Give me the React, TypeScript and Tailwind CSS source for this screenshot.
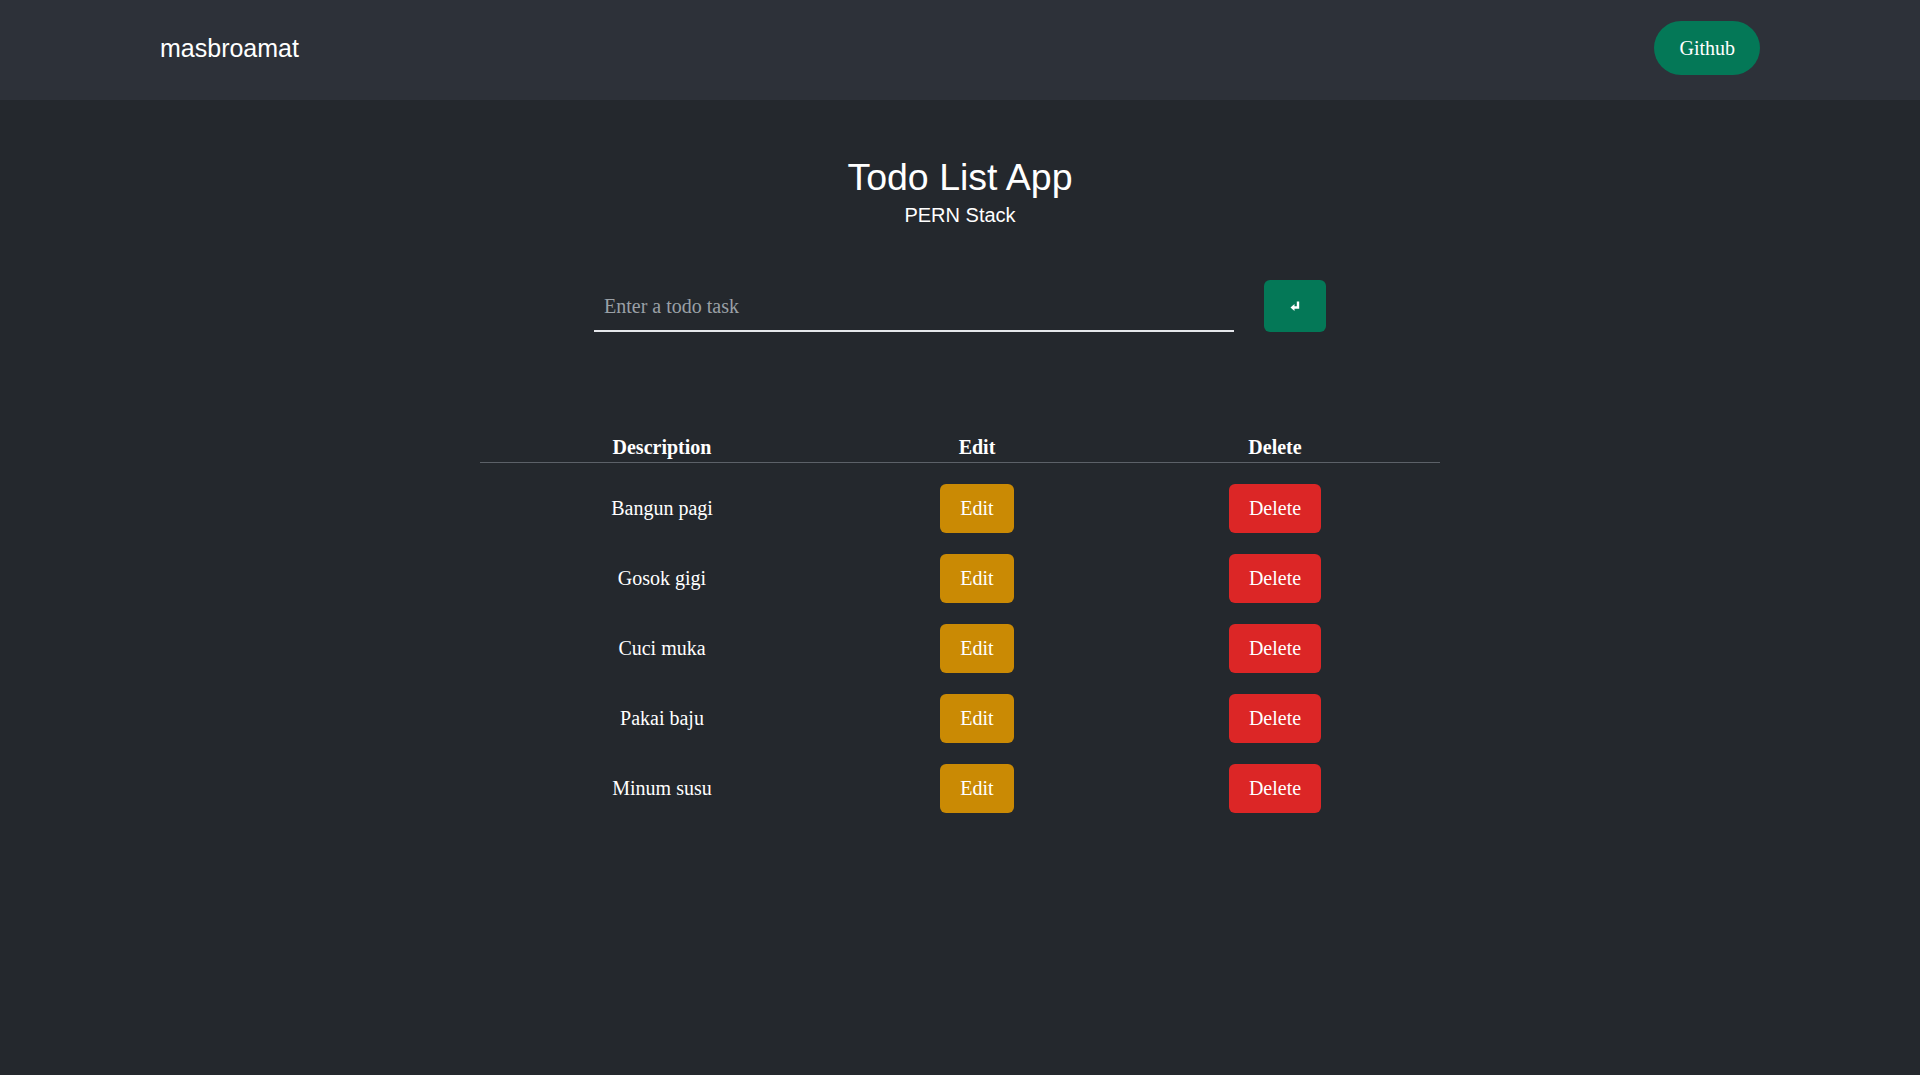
import React from 'react';

const TODOS = ['Bangun pagi', 'Gosok gigi', 'Cuci muka', 'Pakai baju', 'Minum susu'];

const serif = "font-['Liberation_Serif','Times_New_Roman',serif]";

export default function App() {
  return (
    <div className={`min-h-screen bg-[#24282d] text-white ${serif}`}>
      {/* Navbar */}
      <header className="h-[100px] bg-[#2d3139] px-[160px] pb-1 flex items-center justify-between">
        <span className="font-['Liberation_Sans',Arial,sans-serif] text-[25px] leading-none text-white">
          masbroamat
        </span>
        <button className="h-[54px] px-[25px] rounded-full bg-[#047857] text-[20px] leading-6 text-white">
          Github
        </button>
      </header>

      <main className="flex flex-col items-center pt-[55px]">
        {/* Title */}
        <h1 className="font-['Liberation_Sans',Arial,sans-serif] text-[37.5px] leading-[45px] text-white">
          Todo List App
        </h1>
        <p className="mt-[3px] font-['Liberation_Sans',Arial,sans-serif] text-[20px] leading-6 text-white">
          PERN Stack
        </p>

        {/* Input */}
        <form className="mt-[53px] flex items-end gap-[30px]" onSubmit={(e) => e.preventDefault()}>
          <input
            type="text"
            placeholder="Enter a todo task"
            className={`w-[640px] h-[50px] bg-transparent border-b-2 border-[#e5e7eb] pl-[10px] text-[20px] text-white placeholder:text-[#9aa0a6] outline-none ${serif}`}
          />
          <button
            type="submit"
            className="w-[62px] h-[52px] rounded-[6px] bg-[#047857] flex items-center justify-center text-white"
          >
            <svg width="12" height="12" viewBox="0 0 12 12" fill="none">
              <path d="M9 1.5V7.5H4.5" stroke="white" strokeWidth="2.4" />
              <path d="M5.5 4L1.5 7.5L5.5 11Z" fill="white" />
            </svg>
          </button>
        </form>

        {/* Table */}
        <div className="mt-[98px] w-[960px]">
          <div className="grid grid-cols-[364px_266px_330px] border-b border-[#5c6168] pt-[5px] pb-[3px] text-[20px] leading-6 font-bold text-center">
            <div>Description</div>
            <div>Edit</div>
            <div>Delete</div>
          </div>
          <div className="flex flex-col gap-[21px] pt-[21px]">
            {TODOS.map((todo) => (
              <div
                key={todo}
                className="grid grid-cols-[364px_266px_330px] items-center text-center text-[20px] leading-[25px]"
              >
                <div>{todo}</div>
                <div className="flex justify-center">
                  <button className="h-[49px] px-5 rounded-[6px] bg-[#ca8a04] text-white">Edit</button>
                </div>
                <div className="flex justify-center">
                  <button className="h-[49px] px-5 rounded-[6px] bg-[#dc2626] text-white">Delete</button>
                </div>
              </div>
            ))}
          </div>
        </div>
      </main>
    </div>
  );
}
